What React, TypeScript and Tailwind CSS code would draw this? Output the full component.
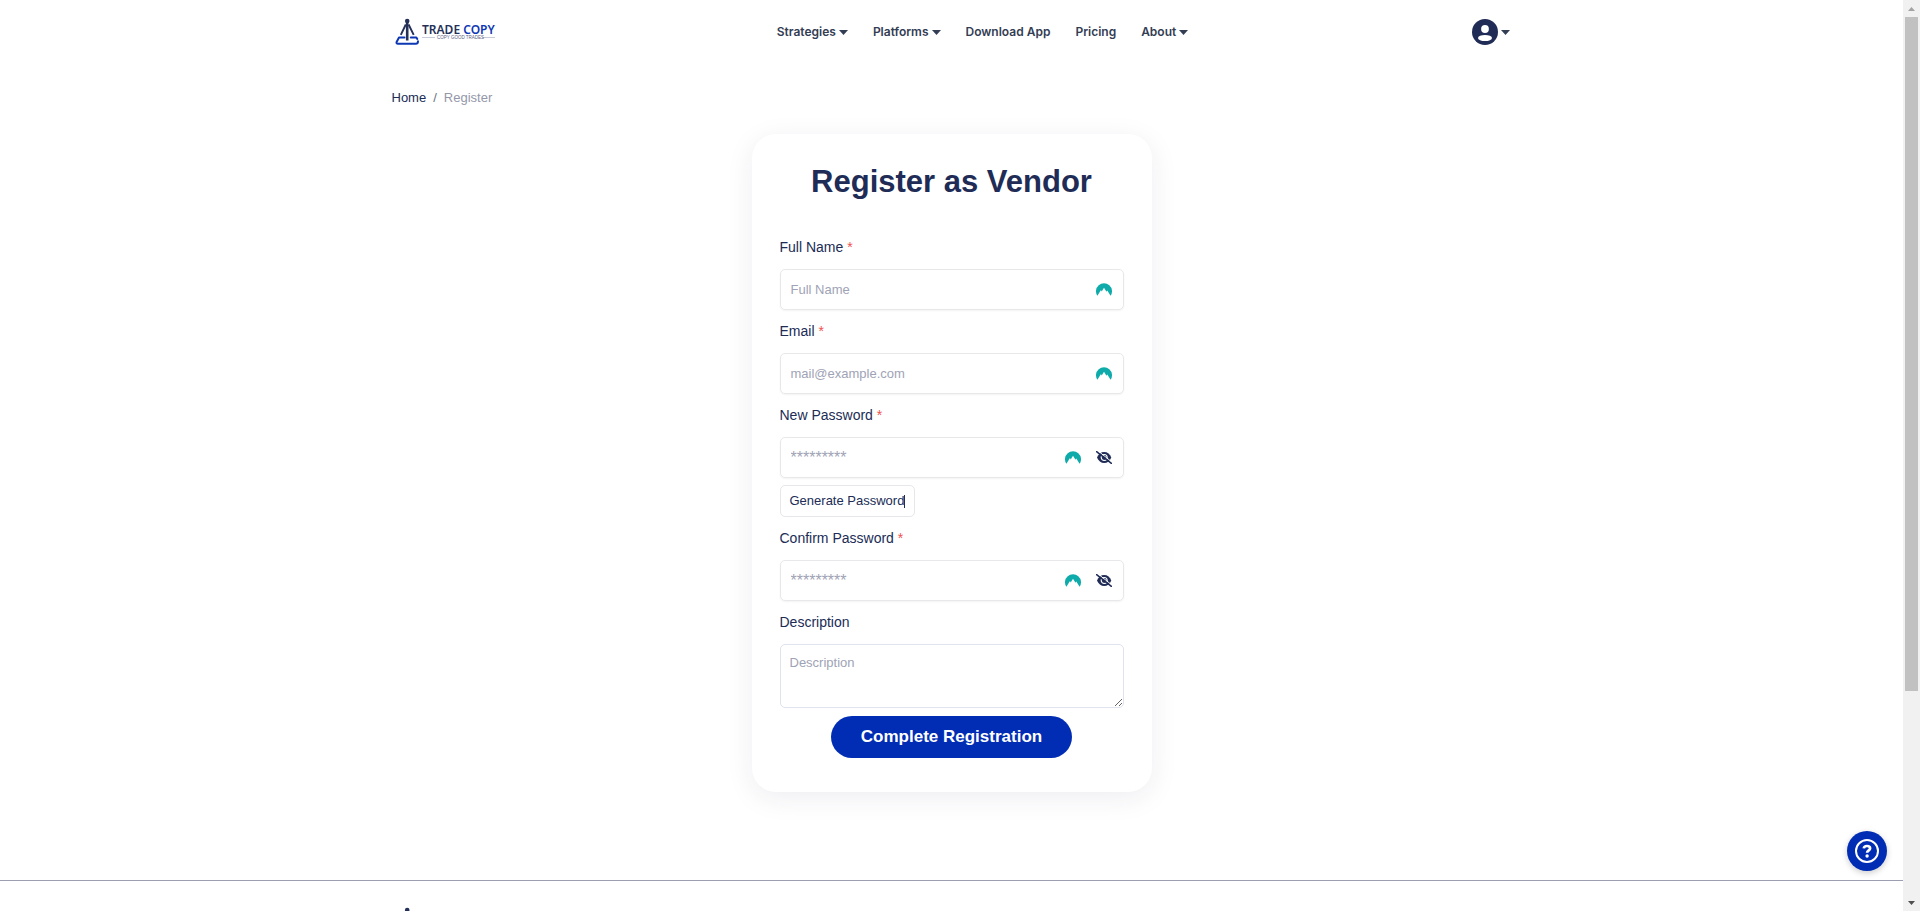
import { useState } from "react";
import type { ReactNode } from "react";

function Caret() {
  return (
    <svg width="9" height="5" viewBox="0 0 9 5" aria-hidden="true">
      <path d="M0 0h9L4.500 5z" fill="currentColor" />
    </svg>
  );
}

function LogoMark() {
  return (
    <g>
      <g fill="none" strokeLinecap="round" strokeLinejoin="round">
        <path d="M9.500 19.600H4L1.600 24Q1.100 25.700 2.800 25.700H20.800Q23 25.700 23 23.200" stroke="#0d37b4" strokeWidth="2" />
        <path d="M15.800 19.600H21.400L22.300 21" stroke="#0d37b4" strokeWidth="2" />
        <path d="M12.200 4V22.500" stroke="#253058" strokeWidth="2.600" strokeLinecap="butt" />
        <path d="M10.800 6.500L5.800 16.800M13.600 6.500L18.700 16.800" stroke="#253058" strokeWidth="1.900" strokeLinecap="butt" />
      </g>
      <circle cx="12.200" cy="3" r="2.300" fill="#253058" />
    </g>
  );
}

function Logo() {
  return (
    <svg width="102" height="28" viewBox="0 0 102 28" role="img" aria-label="Trade Copy">
      <LogoMark />
      <text x="27" y="16" fontFamily="'Noto Sans', sans-serif" fontSize="12" fontWeight="600" fill="#253058">
        TRADE <tspan fill="#0d37b4">COPY</tspan>
      </text>
      <path d="M27 19.500H40M87 19.500H100" stroke="#c9ccd8" strokeWidth="1" />
      <text x="42" y="21" fontFamily="'Liberation Sans', sans-serif" fontSize="4.500" fill="#5a6180">
        COPY GOOD TRADES
      </text>
    </svg>
  );
}

function PassIcon() {
  return (
    <svg width="16" height="13" viewBox="0 0 16 13" aria-hidden="true">
      <path
        d="M1.400 12.800A8 8 0 1 1 14.600 12.800L11.300 7.400L10.500 8.400L10.800 9.200L8 4.800L5.400 9L5.700 8.100L4.800 7.300Z"
        fill="#0fabab"
      />
    </svg>
  );
}

function EyeOffIcon() {
  return (
    <svg width="16" height="13" viewBox="0 0 16 13" aria-hidden="true">
      <path d="M1 6.500C2.400 3 5 1 8.200 1s5.800 2 7.100 5.500C14 10 11.400 12 8.200 12S2.400 10 1 6.500z" fill="#202c56" />
      <circle cx="8.200" cy="6.500" r="3" fill="none" stroke="#fff" strokeWidth="1.100" />
      <path d="M1.600 -0.400L16.400 11.400" stroke="#fff" strokeWidth="1" />
      <path d="M0.600 0.600L15.400 12.400" stroke="#202c56" strokeWidth="1.500" strokeLinecap="round" />
    </svg>
  );
}

function AccountIcon() {
  return (
    <svg width="26" height="26" viewBox="0 0 26 26" aria-hidden="true">
      <circle cx="13" cy="13" r="13" fill="#202c56" />
      <circle cx="13" cy="10" r="3.900" fill="#fff" />
      <ellipse cx="13" cy="19" rx="7" ry="3.100" fill="#fff" />
    </svg>
  );
}

function HelpIcon() {
  return (
    <svg width="24" height="24" viewBox="0 0 24 24" fill="none" stroke="currentColor" aria-hidden="true">
      <circle cx="12" cy="12" r="11" strokeWidth="2" />
      <path d="M8.800 9.400C9 7.800 10.200 7 12 7c1.900 0 3.100 .9 3.100 2.400 0 1.900-3 2-3 4.400" strokeWidth="2.700" />
      <circle cx="12.100" cy="17" r="1.700" fill="currentColor" stroke="none" />
    </svg>
  );
}

const navItems = [
  { label: "Strategies", menu: true },
  { label: "Platforms", menu: true },
  { label: "Download App", menu: false },
  { label: "Pricing", menu: false },
  { label: "About", menu: true },
];

function Label({ id, required, children }: { id: string; required?: boolean; children: ReactNode }) {
  return (
    <label htmlFor={id} className="mb-3 block text-sm leading-5 text-[#202c56]">
      {children}
      {required && <span className="text-[#f0524f]"> *</span>}
    </label>
  );
}

type FieldProps = { id: string; label: string; type: string; placeholder: string };

function Field({ id, label, type, placeholder }: FieldProps) {
  const [visible, setVisible] = useState(false);
  const secret = type === "password";
  return (
    <div>
      <Label id={id} required>
        {label}
      </Label>
      <div className="flex h-[41px] items-center rounded-[5px] border border-[#e8e8ea] pr-[11px] pl-2.5 shadow-[0_1px_2px_rgba(0,0,0,0.05)]">
        <input
          id={id}
          type={secret && visible ? "text" : type}
          placeholder={placeholder}
          className={`min-w-0 flex-1 bg-transparent leading-5 text-[#202c56] outline-none placeholder:text-[#a0a3b5] ${
            secret ? "text-base" : "text-[13px]"
          }`}
        />
        <PassIcon />
        {secret && (
          <button type="button" aria-label="Toggle visibility" onClick={() => setVisible(!visible)} className="ml-[15px]">
            <EyeOffIcon />
          </button>
        )}
      </div>
    </div>
  );
}

export default function App() {
  return (
    <div className="flex h-screen bg-white font-['Liberation_Sans',Arial,sans-serif] text-[#202c56]">
      <div className="relative min-w-0 flex-1 overflow-hidden">
        <header className="mx-auto flex h-16 max-w-[1140px] items-center justify-between px-2.5">
          <a href="#home" className="pl-[3px]">
            <Logo />
          </a>
          <nav className="flex gap-[25px] pr-1 font-['Inter',sans-serif] text-xs font-semibold text-[#333d54]">
            {navItems.map((item) => (
              <a key={item.label} href="#menu" className="flex items-center gap-[3px]">
                {item.label}
                {item.menu && <Caret />}
              </a>
            ))}
          </nav>
          <button type="button" aria-label="Account" className="mr-px flex items-center gap-[3px] text-[#333d54]">
            <AccountIcon />
            <Caret />
          </button>
        </header>

        <nav aria-label="Breadcrumb" className="mx-auto flex max-w-[1140px] gap-[7px] px-2.5 pt-6 text-[13px] leading-5">
          <a href="#home">Home</a>
          <span className="text-[#6b7280]">/</span>
          <span className="text-[#9497aa]">Register</span>
        </nav>

        <main className="px-4 pt-[26px] pb-22">
          <form className="mx-auto max-w-[400px] rounded-3xl bg-white px-7 pt-7 pb-[34px] shadow-[0_6px_28px_rgba(32,44,86,0.08)]">
            <h1 className="mb-[35px] text-center text-[31px] leading-10 font-bold">Register as Vendor</h1>
            <div className="flex flex-col gap-[11px]">
              <Field id="name" label="Full Name" type="text" placeholder="Full Name" />
              <Field id="email" label="Email" type="email" placeholder="mail@example.com" />
              <div>
                <Field id="password" label="New Password" type="password" placeholder="*********" />
                <button
                  type="button"
                  className="mt-[7px] flex h-8 items-center rounded-[5px] border border-[#e5e7eb] px-[9px] text-[13px]"
                >
                  Generate Password
                  <span className="h-[13px] w-px bg-[#202c56]" />
                </button>
              </div>
              <Field id="confirm" label="Confirm Password" type="password" placeholder="*********" />
              <div>
                <Label id="description">Description</Label>
                <textarea
                  id="description"
                  placeholder="Description"
                  className="block h-16 w-full resize rounded-[5px] border border-[#dfe3ec] px-[9px] py-[9px] text-[13px] leading-[18px] outline-none placeholder:text-[#a0a3b5]"
                />
              </div>
            </div>
            <button
              type="submit"
              className="mx-auto mt-2 block h-[42px] rounded-full bg-[#002db3] px-[30px] text-[17px] font-bold text-white"
            >
              Complete Registration
            </button>
          </form>
        </main>

        <footer className="border-t border-[#9b9fb0]">
          <div className="mx-auto max-w-[1140px] px-2.5 pt-[26px]">
            <a href="#home" aria-label="Trade Copy" className="block pl-[3px]">
              <svg width="26" height="28" viewBox="0 0 26 28" aria-hidden="true">
                <LogoMark />
              </svg>
            </a>
          </div>
        </footer>

        <button
          type="button"
          aria-label="Help"
          className="absolute right-4 bottom-10 flex size-10 items-center justify-center rounded-full bg-[#002db3] text-white shadow-[0_2px_6px_rgba(0,0,0,0.2)]"
        >
          <HelpIcon />
        </button>
      </div>

      <div aria-hidden="true" className="flex w-[17px] flex-col items-center bg-[#f1f1f1]">
        <div className="flex h-[17px] items-center text-[#a3a3a3]">
          <svg width="7" height="4" viewBox="0 0 7 4">
            <path d="M0 4h7L3.500 0z" fill="currentColor" />
          </svg>
        </div>
        <div className="flex w-full flex-1 flex-col px-0.5">
          <div className="h-[76.8%] bg-[#c1c1c1]" />
        </div>
        <div className="flex h-[17px] items-center text-[#505050]">
          <svg width="7" height="4" viewBox="0 0 7 4">
            <path d="M0 0h7L3.500 4z" fill="currentColor" />
          </svg>
        </div>
      </div>
    </div>
  );
}
